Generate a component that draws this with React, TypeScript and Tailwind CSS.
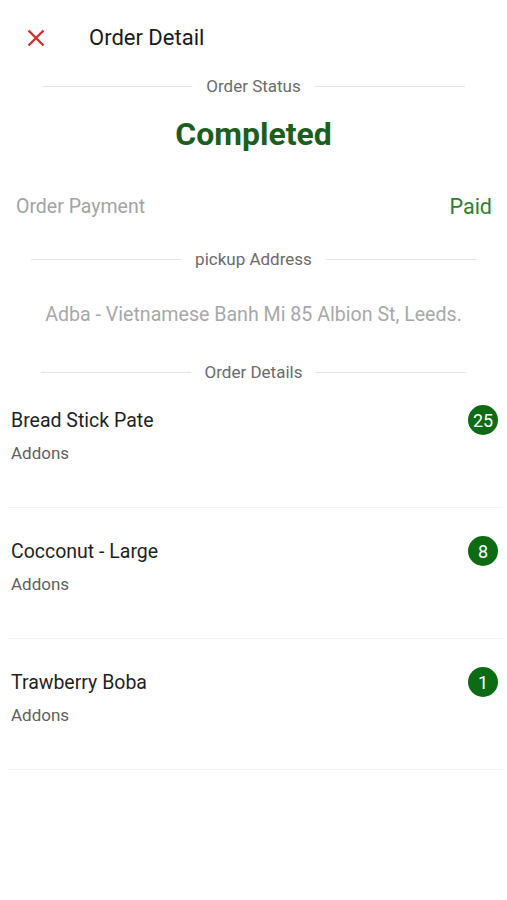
import React from 'react';

const items = [
  { name: 'Bread Stick Pate', qty: 25 },
  { name: 'Cocconut - Large', qty: 8 },
  { name: 'Trawberry Boba', qty: 1 },
];

function SectionTitle({ label }: { label: string }) {
  return (
    <div className="flex h-[20px] items-center justify-center">
      <div className="h-px w-[150px] bg-[#e3e3e3]" />
      <span className="mx-[14px] text-[17px] leading-[20px] text-[#6b6b6b]">{label}</span>
      <div className="h-px w-[150px] bg-[#e3e3e3]" />
    </div>
  );
}

export default function App() {
  return (
    <div className="min-h-[900px] w-full bg-white font-['Roboto','Liberation_Sans',sans-serif]">
      <div className="flex h-[76px] items-center">
        <button className="ml-[27px] flex h-[18px] w-[18px] items-center justify-center">
          <svg viewBox="0 0 18 18" className="h-[18px] w-[18px]" fill="none" stroke="#d32f2f" strokeWidth="2.4">
            <path d="M1.5 1.5 L16.5 16.5 M16.5 1.5 L1.5 16.5" />
          </svg>
        </button>
        <h1 className="ml-[44px] text-[22px] leading-[28px] text-[#1a1a1a]">Order Detail</h1>
      </div>

      <SectionTitle label="Order Status" />

      <div className="mt-[18px] h-[40px] text-center text-[32px] font-bold leading-[40px] text-[#1b5e20]">
        Completed
      </div>

      <div className="mt-[39px] flex h-[28px] items-center justify-between pl-[16px] pr-[15px]">
        <span className="text-[19.5px] text-[#a3a3a3]">Order Payment</span>
        <span className="text-[21.5px] text-[#2e7d32]">Paid</span>
      </div>

      <div className="mt-[28px]">
        <SectionTitle label="pickup Address" />
      </div>

      <div className="mt-[32px] h-[28px] text-center text-[19.6px] leading-[28px] text-[#a8a8a8]">
        Adba - Vietnamese Banh Mi 85 Albion St, Leeds.
      </div>

      <div className="mt-[33px]">
        <SectionTitle label="Order Details" />
      </div>

      <div className="mt-[-5px] pl-[8px] pr-[4px]">
        {items.map(item => (
          <div key={item.name} className="flex h-[131px] border-b border-[#f2f2f2] pl-[3px] pr-[5px]">
            <div className="flex-1 pt-[32px]">
              <div className="text-[19.5px] leading-[24px] text-[#1f1f1f]">{item.name}</div>
              <div className="mt-[9px] text-[17px] leading-[22px] text-[#5f5f5f]">Addons</div>
            </div>
            <div className="pt-[28px]">
              <div className="flex h-[30px] w-[30px] items-center justify-center rounded-full bg-[#0d6b14] text-[18px] text-white">
                {item.qty}
              </div>
            </div>
          </div>
        ))}
      </div>
    </div>
  );
}
